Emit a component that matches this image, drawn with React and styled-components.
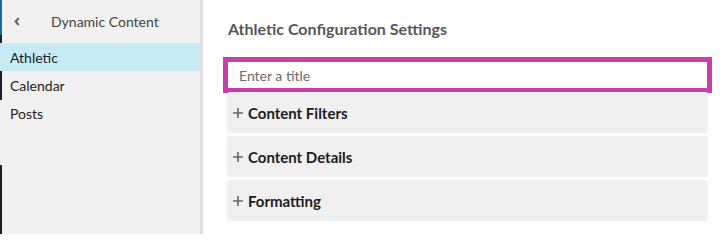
import React from "react";
import styled, { createGlobalStyle } from "styled-components";

const Global = createGlobalStyle`
  html, body { margin: 0; padding: 0; background: #fff; }
  body { font-family: Lato, "Open Sans", sans-serif; -webkit-font-smoothing: antialiased; }
  * { box-sizing: border-box; }
`;

const Layout = styled.div`
  display: flex;
  height: 234px;
  width: 723px;
  overflow: hidden;
`;

const Sidebar = styled.aside`
  width: 203px;
  flex-shrink: 0;
  background-color: #f1f1f1;
  background-image: linear-gradient(
    to bottom,
    #1a6b9c 0 35px,
    #1e2028 35px 100px,
    transparent 100px 165px,
    #1e2028 165px
  );
  background-size: 2px 100%;
  background-repeat: no-repeat;
  border-right: 3px solid #dfdfe4;
  display: flex;
  flex-direction: column;
`;

const SideHeader = styled.div`
  height: 43px;
  display: flex;
  align-items: center;
  padding-left: 14px;
  gap: 31px;
  color: #444;
  font-size: 14px;
`;

const NavItem = styled.div`
  height: 28px;
  display: flex;
  align-items: center;
  padding-left: 10px;
  font-size: 14px;
  color: #222;
  background: ${(p) => (p.$active ? "#c6ebf7" : "transparent")};
`;

const Main = styled.main`
  flex: 1;
  padding: 19px 15px 0 24px;
  display: flex;
  flex-direction: column;
`;

const Title = styled.h1`
  margin: 0 0 22px 1px;
  font-size: 16px;
  line-height: 20px;
  font-weight: 700;
  color: #575757;
`;

const Stack = styled.div`
  display: flex;
  flex-direction: column;
  gap: 3px;
`;

const TitleInput = styled.input`
  height: 28px;
  width: 100%;
  border: 1px solid #e2e2e2;
  outline: 5px solid #c83fa9;
  outline-offset: -1px;
  padding: 0 11px;
  font-family: Lato, sans-serif;
  font-size: 14px;
  color: #333;
  background: #fff;
  &::placeholder { color: #6b6b6b; }
`;

const Panel = styled.div`
  height: 41px;
  background: #f0f0f0;
  border-radius: 3px;
  display: flex;
  align-items: center;
  padding-left: 6px;
  gap: 5px;
  font-size: 15px;
  font-weight: 700;
  color: #1c1c1c;
`;

const Chevron = () => (
  <svg width="6" height="9" viewBox="0 0 6 9">
    <path d="M4.8 1 L1.6 4.5 L4.8 8" fill="none" stroke="#666" strokeWidth="2" />
  </svg>
);

const Plus = () => (
  <svg width="10" height="10" viewBox="0 0 10 10">
    <path d="M0 5 H10 M5 0 V10" stroke="#666" strokeWidth="1.6" />
  </svg>
);

const sections = ["Content Filters", "Content Details", "Formatting"];

export default function App() {
  return (
    <>
      <Global />
      <Layout>
        <Sidebar>
          <SideHeader>
            <Chevron />
            <span>Dynamic Content</span>
          </SideHeader>
          <NavItem $active>Athletic</NavItem>
          <NavItem>Calendar</NavItem>
          <NavItem>Posts</NavItem>
        </Sidebar>
        <Main>
          <Title>Athletic Configuration Settings</Title>
          <Stack>
            <TitleInput placeholder="Enter a title" />
            {sections.map((s) => (
              <Panel key={s}>
                <Plus />
                <span>{s}</span>
              </Panel>
            ))}
          </Stack>
        </Main>
      </Layout>
    </>
  );
}
